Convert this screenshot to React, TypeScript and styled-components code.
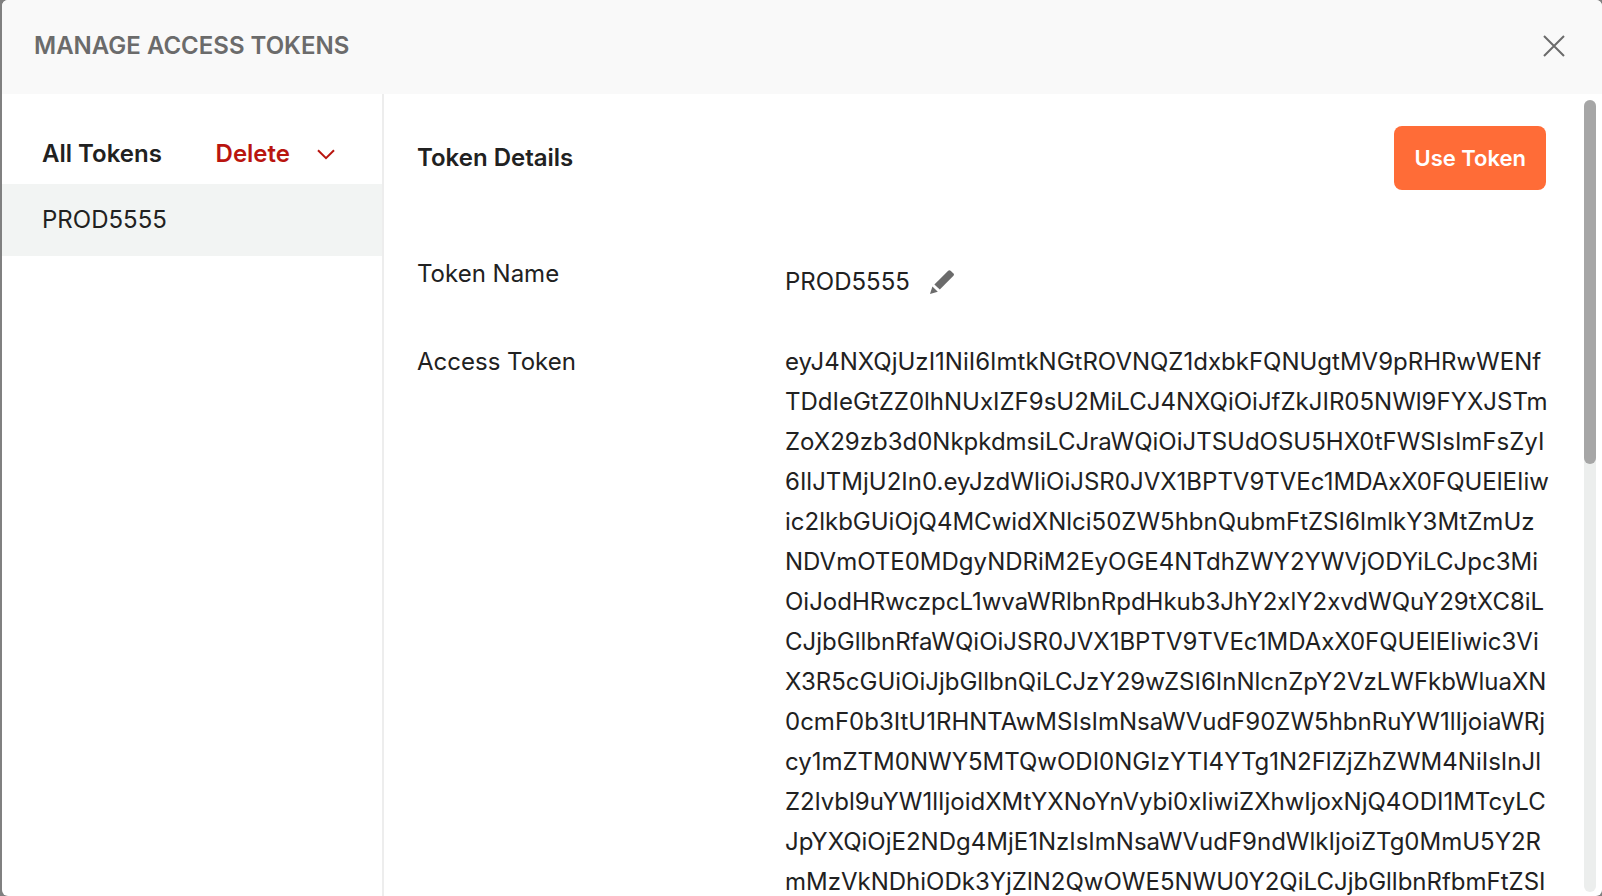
import React from "react";
import styled, { createGlobalStyle } from "styled-components";

const Global = createGlobalStyle`
  *, *::before, *::after { box-sizing: border-box; }
  html, body { margin: 0; background: #808080; }
  body {
    font-family: Inter, "Liberation Sans", sans-serif;
    font-size: 24px;
    line-height: 40px;
    color: #212121;
    overflow: hidden;
  }
  h1, h2, h3, p, dl, dd, ul { margin: 0; padding: 0; }
  button { font: inherit; border: 0; background: none; padding: 0; cursor: pointer; }
`;

const Modal = styled.div`
  display: flex;
  flex-direction: column;
  height: 100vh;
  margin-left: 2px;
  background: #fff;
  border-radius: 6px;
  overflow: hidden;
`;

const Header = styled.header`
  display: flex;
  flex: none;
  align-items: center;
  justify-content: space-between;
  height: 94px;
  padding: 0 36px 2px 32px;
  background: #f9f9f9;
`;

const Title = styled.h1`
  font-size: 24px;
  font-weight: 600;
  color: #6b6b6b;
`;

const IconButton = styled.button`
  display: flex;
  flex: none;
`;

const Body = styled.div`
  display: flex;
  flex: 1;
  min-height: 0;
`;

const Sidebar = styled.aside`
  flex: none;
  width: 382px;
  padding-top: 40px;
  border-right: 2px solid #ededed;
`;

const SidebarHead = styled.div`
  display: flex;
  align-items: center;
  height: 50px;
  padding: 0 44px 10px 40px;
`;

const Heading = styled.h2`
  font-size: 24px;
  font-weight: 600;
`;

const DeleteButton = styled.button`
  display: flex;
  align-items: center;
  gap: 24px;
  margin-left: auto;
  font-weight: 600;
  color: #b9150f;
`;

const TokenList = styled.ul`
  list-style: none;
`;

const TokenItem = styled.li`
  padding: 16px 40px;
  background: #f2f4f3;
`;

const Details = styled.main`
  flex: 1;
  min-width: 0;
  padding: 32px 38px 0 33px;
  overflow: hidden;
`;

const DetailsHead = styled.div`
  display: flex;
  align-items: center;
  justify-content: space-between;
  height: 64px;
`;

const UseButton = styled.button`
  height: 64px;
  padding: 0 20px;
  border-radius: 8px;
  background: #ff6c37;
  color: #fff;
  font-size: 22px;
  font-weight: 600;
`;

const Fields = styled.dl`
  display: grid;
  grid-template-columns: 368px minmax(0, 1fr);
  row-gap: 40px;
  padding-top: 64px;
`;

const NameValue = styled.dd`
  display: flex;
  align-items: center;
  gap: 18px;
  padding-top: 8px;
`;

const TokenValue = styled.dd`
  white-space: pre;
`;

const ScrollTrack = styled.div`
  flex: none;
  width: 12px;
  margin: 6px 6px 4px 0;
  border-radius: 6px;
  background: #eceeed;
`;

const ScrollThumb = styled.div`
  height: 46%;
  border-radius: 6px;
  background: #a6a6a6;
`;

const TOKEN = [
  "eyJ4NXQjUzI1NiI6ImtkNGtROVNQZ1dxbkFQNUgtMV9pRHRwWENf",
  "TDdIeGtZZ0lhNUxIZF9sU2MiLCJ4NXQiOiJfZkJIR05NWl9FYXJSTm",
  "ZoX29zb3d0NkpkdmsiLCJraWQiOiJTSUdOSU5HX0tFWSIsImFsZyI",
  "6IlJTMjU2In0.eyJzdWIiOiJSR0JVX1BPTV9TVEc1MDAxX0FQUElEIiw",
  "ic2lkbGUiOjQ4MCwidXNlci50ZW5hbnQubmFtZSI6ImlkY3MtZmUz",
  "NDVmOTE0MDgyNDRiM2EyOGE4NTdhZWY2YWVjODYiLCJpc3Mi",
  "OiJodHRwczpcL1wvaWRlbnRpdHkub3JhY2xlY2xvdWQuY29tXC8iL",
  "CJjbGllbnRfaWQiOiJSR0JVX1BPTV9TVEc1MDAxX0FQUElEIiwic3Vi",
  "X3R5cGUiOiJjbGllbnQiLCJzY29wZSI6InNlcnZpY2VzLWFkbWluaXN",
  "0cmF0b3ItU1RHNTAwMSIsImNsaWVudF90ZW5hbnRuYW1lIjoiaWRj",
  "cy1mZTM0NWY5MTQwODI0NGIzYTI4YTg1N2FlZjZhZWM4NiIsInJl",
  "Z2lvbl9uYW1lIjoidXMtYXNoYnVybi0xIiwiZXhwIjoxNjQ4ODI1MTcyLC",
  "JpYXQiOjE2NDg4MjE1NzIsImNsaWVudF9ndWlkIjoiZTg0MmU5Y2R",
  "mMzVkNDhiODk3YjZlN2QwOWE5NWU0Y2QiLCJjbGllbnRfbmFtZSI",
].join("\n");

function CloseIcon() {
  return (
    <svg width="24" height="24" viewBox="0 0 24 24" fill="none" stroke="#6b6b6b" strokeWidth="2" aria-hidden="true">
      <path d="M2 2 22 22M22 2 2 22" />
    </svg>
  );
}

function ChevronIcon() {
  return (
    <svg width="24" height="24" viewBox="0 0 24 24" fill="none" stroke="currentColor" strokeWidth="2" aria-hidden="true">
      <path d="M4 8.2 12 16.2 20 8.2" />
    </svg>
  );
}

function PencilIcon() {
  return (
    <svg width="28" height="28" viewBox="0 0 28 28" fill="#6b6b6b" aria-hidden="true">
      <path d="M6.4 16.6 20.2 2.8Q21.4 1.7 22.6 2.8L25.5 5.5Q26.6 6.6 25.5 7.8L11.8 21.6Z" />
      <path d="M4.4 18.4 9.8 23.8 2 26Z" />
    </svg>
  );
}

export default function App() {
  return (
    <>
      <Global />
      <Modal role="dialog" aria-labelledby="dialog-title">
        <Header>
          <Title id="dialog-title">MANAGE ACCESS TOKENS</Title>
          <IconButton type="button" aria-label="Close">
            <CloseIcon />
          </IconButton>
        </Header>
        <Body>
          <Sidebar>
            <SidebarHead>
              <Heading>All Tokens</Heading>
              <DeleteButton type="button">
                Delete
                <ChevronIcon />
              </DeleteButton>
            </SidebarHead>
            <TokenList>
              <TokenItem>PROD5555</TokenItem>
            </TokenList>
          </Sidebar>
          <Details>
            <DetailsHead>
              <Heading>Token Details</Heading>
              <UseButton type="button">Use Token</UseButton>
            </DetailsHead>
            <Fields>
              <dt>Token Name</dt>
              <NameValue>
                PROD5555
                <IconButton type="button" aria-label="Edit token name">
                  <PencilIcon />
                </IconButton>
              </NameValue>
              <dt>Access Token</dt>
              <TokenValue>{TOKEN}</TokenValue>
            </Fields>
          </Details>
          <ScrollTrack>
            <ScrollThumb />
          </ScrollTrack>
        </Body>
      </Modal>
    </>
  );
}
